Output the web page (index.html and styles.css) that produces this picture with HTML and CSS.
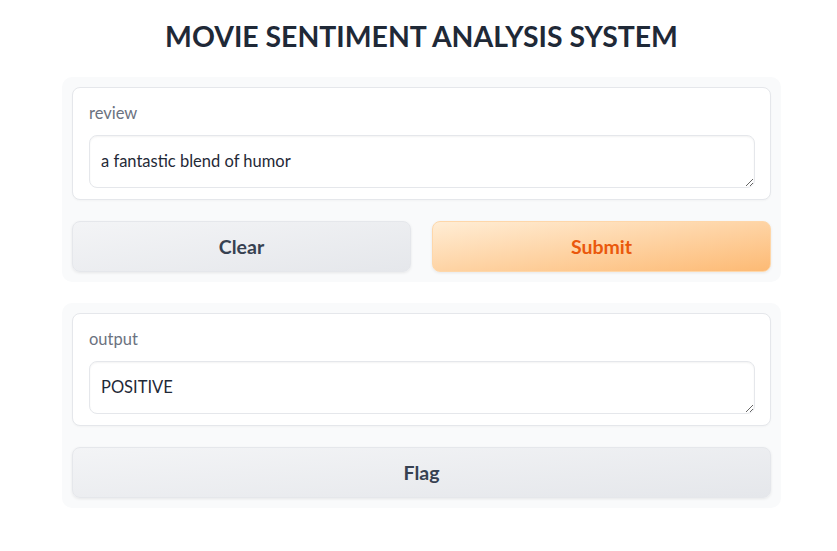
FILE: index.html
```html
<!DOCTYPE html>
<html>
<head>
<meta charset="utf-8">
<link rel="stylesheet" href="styles.css">
</head>
<body>
<div class="app">
  <h1 class="title">MOVIE SENTIMENT ANALYSIS SYSTEM</h1>
  <div class="panel">
    <div class="block">
      <label class="label" for="review">review</label>
      <textarea id="review" class="field" rows="1">a fantastic blend of humor</textarea>
    </div>
    <div class="row">
      <button class="btn btn-secondary">Clear</button>
      <button class="btn btn-primary">Submit</button>
    </div>
  </div>
  <div class="panel">
    <div class="block">
      <label class="label" for="output">output</label>
      <textarea id="output" class="field" rows="1" readonly>POSITIVE</textarea>
    </div>
    <div class="row">
      <button class="btn btn-secondary">Flag</button>
    </div>
  </div>
</div>
</body>
</html>
```

FILE: styles.css
```css
* { box-sizing: border-box; }
html, body { margin: 0; padding: 0; background: #ffffff; }
body {
  font-family: "Lato", "Noto Sans", sans-serif;
  color: #1f2937;
}
.app {
  width: 719px;
  margin-left: 62px;
  padding-top: 14px;
  display: flex;
  flex-direction: column;
  gap: 21px;
}
.title {
  margin: 0 0 -2px 0;
  text-align: center;
  font-size: 28.4px;
  line-height: 44px;
  font-weight: 700;
  color: #1f2937;
}
.panel {
  background: #f9fafb;
  border-radius: 10px;
  padding: 10px;
  display: flex;
  flex-direction: column;
  gap: 21px;
}
.block {
  background: #ffffff;
  border: 1px solid #e5e7eb;
  border-radius: 8px;
  padding: 12px 15px 11px 16px;
  display: flex;
  flex-direction: column;
  box-shadow: 0 1px 2px rgba(0,0,0,0.03);
}
.label {
  font-size: 16.5px;
  line-height: 26px;
  color: #6b7280;
  margin-bottom: 9px;
}
.field {
  display: block;
  width: 100%;
  height: 53px;
  margin: 0;
  padding: 14px 11px;
  border: 1px solid #e5e7eb;
  border-radius: 8px;
  font-family: "Lato", "Noto Sans", sans-serif;
  font-size: 16.5px;
  line-height: 23px;
  color: #1f2937;
  background: #ffffff;
  resize: vertical;
  outline: none;
  box-shadow: inset 0 1px 2px rgba(0,0,0,0.05);
  overflow: hidden;
}
.row {
  display: flex;
  gap: 21px;
}
.btn {
  flex: 1;
  height: 51px;
  border-radius: 8px;
  font-family: "Lato", "Noto Sans", sans-serif;
  font-size: 19.5px;
  font-weight: 700;
  cursor: pointer;
  box-shadow: 0 1px 3px rgba(0,0,0,0.08);
}
.btn-secondary {
  background: linear-gradient(to bottom right, #f3f4f6, #e5e7eb);
  border: 1px solid #e5e7eb;
  color: #374151;
}
.btn-primary {
  background: linear-gradient(to bottom right, #ffedd5, #fdba74);
  border: 1px solid #fed7aa;
  color: #ea580c;
}
```
